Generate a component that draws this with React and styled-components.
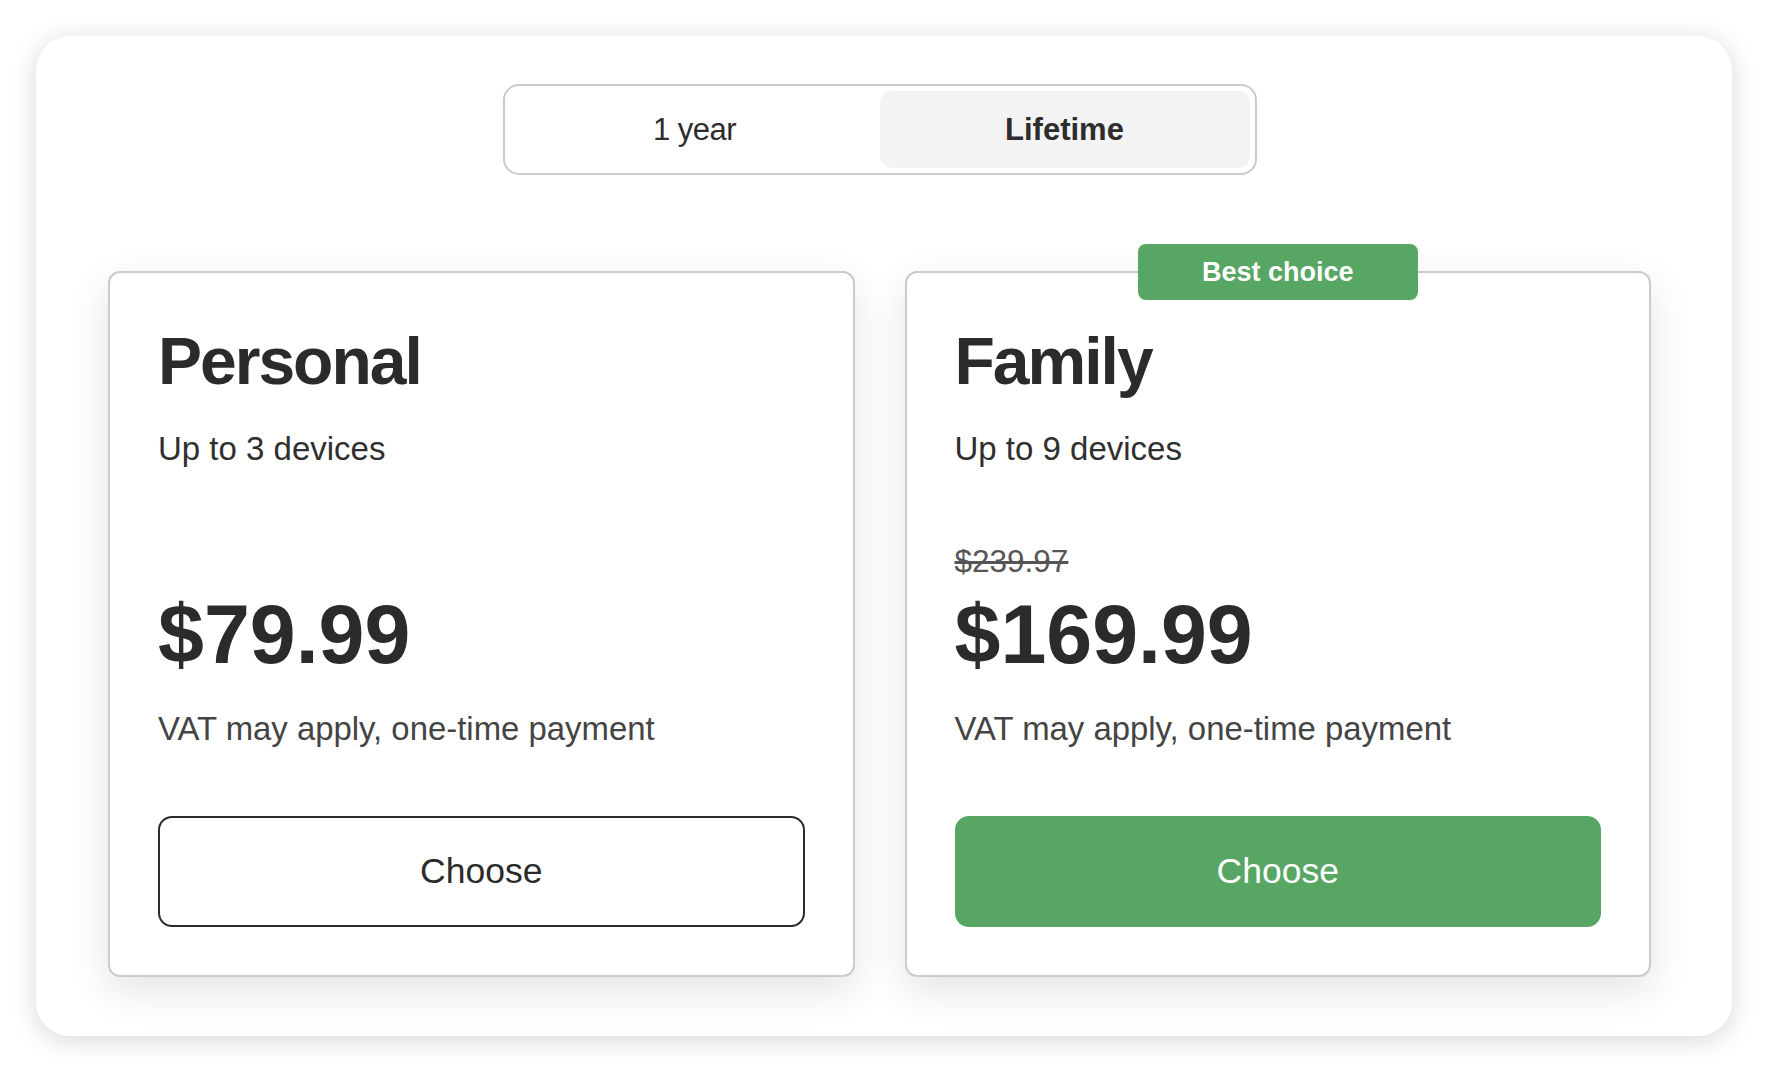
import styled, { createGlobalStyle } from "styled-components";

const GlobalStyle = createGlobalStyle`
  html, body {
    margin: 0;
    padding: 0;
    background: #ffffff;
  }
  body {
    font-family: "Liberation Sans", Arial, sans-serif;
    color: #2d2d2d;
  }
  * {
    box-sizing: border-box;
  }
`;

const Page = styled.div`
  width: 1768px;
  height: 1072px;
  padding: 36px;
`;

const Panel = styled.div`
  width: 1696px;
  height: 1000px;
  padding: 48px 81px 0 72px;
  background: #fff;
  border-radius: 34px;
  box-shadow: 0 4px 26px rgba(0, 0, 0, 0.16);
  display: flex;
  flex-direction: column;
  align-items: center;
`;

const Toggle = styled.div`
  width: 754px;
  height: 91px;
  padding: 5px;
  border: 2px solid #cbcbcb;
  border-radius: 16px;
  display: grid;
  grid-template-columns: 1fr 1fr;
`;

const Segment = styled.button`
  border: none;
  border-radius: 12px;
  background: ${(p) => (p.$active ? "#f3f3f3" : "transparent")};
  font-family: "Liberation Sans", Arial, sans-serif;
  font-size: 31px;
  font-weight: ${(p) => (p.$active ? 700 : 400)};
  letter-spacing: ${(p) => (p.$active ? "0" : "-0.5px")};
  color: #2d2d2d;
  cursor: pointer;
`;

const Cards = styled.div`
  margin-top: 96px;
  width: 100%;
  display: grid;
  grid-template-columns: 1fr 1fr;
  gap: 50px;
`;

const Card = styled.div`
  position: relative;
  height: 706px;
  padding: 52px 48px 48px;
  border: 2px solid #cbcbcb;
  border-radius: 12px;
  background: #fff;
  box-shadow: 0 14px 40px rgba(0, 0, 0, 0.11);
`;

const Badge = styled.div`
  position: absolute;
  top: -29px;
  left: 50%;
  transform: translateX(-50%);
  width: 280px;
  height: 56px;
  border-radius: 8px;
  background: #57a664;
  color: #fff;
  font-size: 27px;
  font-weight: 700;
  display: flex;
  align-items: center;
  justify-content: center;
`;

const Title = styled.h2`
  margin: 0;
  font-size: 66px;
  line-height: 72px;
  font-weight: 700;
  letter-spacing: -2px;
  color: #2b2b2b;
`;

const Devices = styled.p`
  margin: 32px 0 0;
  font-size: 33px;
  line-height: 40px;
  color: #2f2f2f;
`;

const OldPrice = styled.div`
  margin-top: 74px;
  height: 36px;
  font-size: 31.5px;
  line-height: 36px;
  color: #555;
  text-decoration: line-through;
  text-decoration-thickness: 3px;
`;

const Price = styled.div`
  margin-top: 13px;
  font-size: 82.5px;
  line-height: 84px;
  font-weight: 700;
  color: #2b2b2b;
`;

const Note = styled.p`
  margin: 33px 0 0;
  font-size: 32.9px;
  line-height: 40px;
  color: #444;
`;

const ChooseButton = styled.button`
  margin-top: 67px;
  width: 100%;
  height: 111px;
  border-radius: 14px;
  border: 2px solid ${(p) => (p.$primary ? "#57a664" : "#2b2b2b")};
  background: ${(p) => (p.$primary ? "#57a664" : "#fff")};
  color: ${(p) => (p.$primary ? "#fff" : "#2b2b2b")};
  font-family: "Liberation Sans", Arial, sans-serif;
  font-size: 35.5px;
  cursor: pointer;
`;

const plans = [
  {
    name: "Personal",
    devices: "Up to 3 devices",
    price: "$79.99",
  },
  {
    name: "Family",
    devices: "Up to 9 devices",
    oldPrice: "$239.97",
    price: "$169.99",
    best: true,
  },
];

const PlanCard = ({ plan }) => (
  <Card>
    {plan.best && <Badge>Best choice</Badge>}
    <Title>{plan.name}</Title>
    <Devices>{plan.devices}</Devices>
    <OldPrice>{plan.oldPrice}</OldPrice>
    <Price>{plan.price}</Price>
    <Note>VAT may apply, one-time payment</Note>
    <ChooseButton $primary={plan.best}>Choose</ChooseButton>
  </Card>
);

const App = () => {
  return (
    <>
      <GlobalStyle />
      <Page>
        <Panel>
          <Toggle>
            <Segment>1 year</Segment>
            <Segment $active>Lifetime</Segment>
          </Toggle>
          <Cards>
            {plans.map((plan) => (
              <PlanCard key={plan.name} plan={plan} />
            ))}
          </Cards>
        </Panel>
      </Page>
    </>
  );
};

export default App;
